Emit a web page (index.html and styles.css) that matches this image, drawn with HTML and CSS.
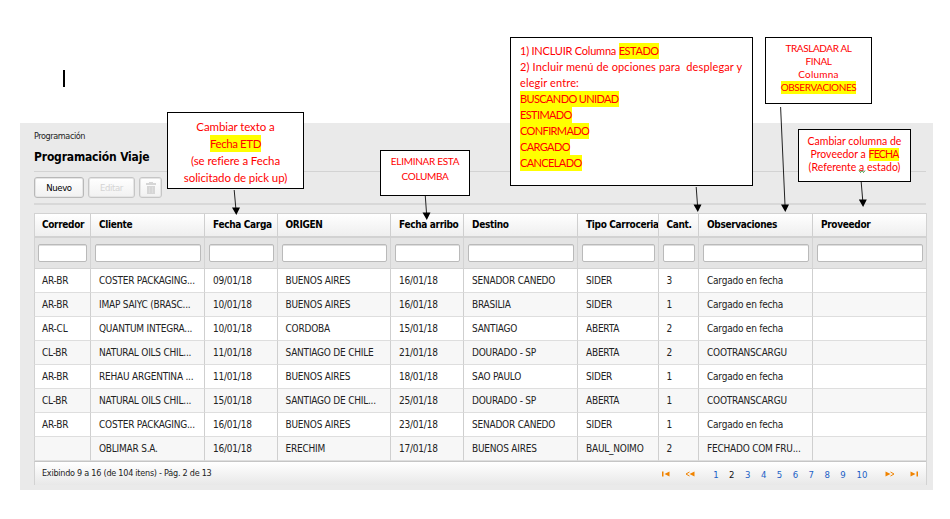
FILE: index.html
```html
<!DOCTYPE html>
<html lang="es">
<head>
<meta charset="utf-8">
<title>Programación Viaje</title>
<link rel="stylesheet" href="styles.css">
</head>
<body>
<span class="caret"></span>
<main class="panel">
  <div class="crumb">Programación</div>
  <h1>Programación Viaje</h1>
  <div class="toolbar">
    <button class="btn new">Nuevo</button>
    <button class="btn edit" disabled>Editar</button>
    <button class="btn del" disabled aria-label="Eliminar"><svg width="12" height="14" viewBox="0 0 12 14"><path d="M1 2h3V1h4v1h3v2H1zM2 5h8v8H2z" fill="#d6d6d6"/><path d="M4.5 6v6M7.5 6v6" stroke="#dedede"/></svg></button>
  </div>
  <section class="grid">
    <div class="row head"><div>Corredor</div><div>Cliente</div><div>Fecha Carga</div><div>ORIGEN</div><div>Fecha arribo</div><div>Destino</div><div>Tipo Carroceria</div><div>Cant.</div><div>Observaciones</div><div>Proveedor</div></div>
    <div class="row filter"><div><input></div><div><input></div><div><input></div><div><input></div><div><input></div><div><input></div><div><input></div><div><input></div><div><input></div><div><input></div></div>
    <div class="row"><div>AR-BR</div><div>COSTER PACKAGING...</div><div>09/01/18</div><div>BUENOS AIRES</div><div>16/01/18</div><div>SENADOR CANEDO</div><div>SIDER</div><div>3</div><div>Cargado en fecha</div><div></div></div>
    <div class="row alt"><div>AR-BR</div><div>IMAP SAIYC (BRASC...</div><div>10/01/18</div><div>BUENOS AIRES</div><div>16/01/18</div><div>BRASILIA</div><div>SIDER</div><div>1</div><div>Cargado en fecha</div><div></div></div>
    <div class="row"><div>AR-CL</div><div>QUANTUM INTEGRA...</div><div>10/01/18</div><div>CORDOBA</div><div>15/01/18</div><div>SANTIAGO</div><div>ABERTA</div><div>2</div><div>Cargado en fecha</div><div></div></div>
    <div class="row alt"><div>CL-BR</div><div>NATURAL OILS CHIL...</div><div>11/01/18</div><div>SANTIAGO DE CHILE</div><div>21/01/18</div><div>DOURADO - SP</div><div>ABERTA</div><div>2</div><div>COOTRANSCARGU</div><div></div></div>
    <div class="row"><div>AR-BR</div><div>REHAU ARGENTINA ...</div><div>11/01/18</div><div>BUENOS AIRES</div><div>18/01/18</div><div>SAO PAULO</div><div>SIDER</div><div>1</div><div>Cargado en fecha</div><div></div></div>
    <div class="row alt"><div>CL-BR</div><div>NATURAL OILS CHIL...</div><div>15/01/18</div><div>SANTIAGO DE CHIL...</div><div>25/01/18</div><div>DOURADO - SP</div><div>ABERTA</div><div>1</div><div>COOTRANSCARGU</div><div></div></div>
    <div class="row"><div>AR-BR</div><div>COSTER PACKAGING...</div><div>16/01/18</div><div>BUENOS AIRES</div><div>23/01/18</div><div>SENADOR CANEDO</div><div>SIDER</div><div>1</div><div>Cargado en fecha</div><div></div></div>
    <div class="row alt"><div></div><div>OBLIMAR S.A.</div><div>16/01/18</div><div>ERECHIM</div><div>17/01/18</div><div>BUENOS AIRES</div><div>BAUL_NOIMO</div><div>2</div><div>FECHADO COM FRU...</div><div></div></div>
    <footer>
      <span class="count">Exibindo 9 a 16 (de 104 itens) - Pág. 2 de 13</span>
      <nav>
        <svg class="first" width="8" height="6" viewBox="0 0 8 6"><path d="M0 .5h1.5v5H0zM7.5 .5v5L2.5 3z"/></svg>
        <svg class="prev" width="10" height="6" viewBox="0 0 10 6"><path d="M9.5 .5v5L4.5 3z"/><path class="open" d="M4.5 1L1 3l3.500 2"/></svg>
        <a>1</a><a class="now">2</a><a>3</a><a>4</a><a>5</a><a>6</a><a>7</a><a>8</a><a>9</a><a class="ten">10</a>
        <svg class="next" width="10" height="6" viewBox="0 0 10 6"><path d="M.5 .5v5L5.500 3z"/><path class="open" d="M5.500 1L9 3L5.500 5"/></svg>
        <svg class="last" width="8" height="6" viewBox="0 0 8 6"><path d="M.5 .5v5L5.500 3zM6.500 .5H8v5H6.500z"/></svg>
      </nav>
    </footer>
  </section>
</main>

<aside class="note n1"><p>Cambiar texto a</p><p><mark>Fecha ETD</mark></p><p>(se refiere a Fecha</p><p>solicitado de pick up)</p></aside>
<aside class="note n2"><p>ELIMINAR ESTA</p><p>COLUMBA</p></aside>
<aside class="note n3"><p class="include">1) INCLUIR Columna <mark>ESTADO</mark></p><p class="menu">2) Incluir menú de opciones para&nbsp; desplegar y</p><p class="menu">elegir entre:</p><p><mark>BUSCANDO UNIDAD</mark></p><p><mark>ESTIMADO</mark></p><p><mark>CONFIRMADO</mark></p><p><mark>CARGADO</mark></p><p><mark>CANCELADO</mark></p></aside>
<aside class="note n4"><p>TRASLADAR AL</p><p>FINAL</p><p class="mixed">Columna</p><p><mark>OBSERVACIONES</mark></p></aside>
<aside class="note n5"><p>Cambiar columna de</p><p>Proveedor a <mark>FECHA</mark></p><p>(Referente a estado)</p></aside>
<svg class="arrows" width="950" height="519" viewBox="0 0 950 519">
  <path class="line" d="M234.200 190L235.800 208M425.300 196L426.500 213M696.200 187L697.500 205M780.600 107L785 205M861.200 182L862.700 200"/>
  <path d="M232 207.500h8l-3.700 7.500zM422.500 212.500h8l-3.700 7.500zM693.500 204.500h8l-3.700 7.500zM781 204.500h8l-3.700 7.500zM858.800 199.500h8l-3.700 7.500z"/>
  <path class="spell" d="M859 170.500l1.500 2 1.500-2 1.500 2 1.500-2"/>
</svg>
</body>
</html>
```
FILE: styles.css
```css
* { box-sizing: border-box; }
body { margin: 0; width: 950px; height: 519px; overflow: hidden; background: #fff; position: relative; color: #222; font-family: "DejaVu Sans Condensed", "DejaVu Sans", sans-serif; font-stretch: condensed; font-size: 10px; }
.caret { position: absolute; left: 63px; top: 70px; width: 2px; height: 17px; background: #000; }
.panel { margin: 123px 0 0 20px; width: 913px; height: 367px; padding: 7px 7px 0 14px; background: #eaeaea; display: flow-root; }
.crumb { font-size: 9px; line-height: 12px; letter-spacing: -.4px; }
h1 { margin: 6px 0 0; font-size: 12px; line-height: 18px; height: 24px; color: #000; letter-spacing: -.18px; border-bottom: 1px solid #d3d3d3; }
.toolbar { display: flex; gap: 4px; height: 33px; padding-top: 5px; border-bottom: 2px solid #d8d8d8; }
.btn { height: 21px; padding: 0; border: 1px solid #b8b8b8; border-radius: 3px; box-shadow: inset 0 0 0 1px #e5e5e5; background: linear-gradient(#fff, #f1f1f1); font: inherit; font-size: 9.5px; color: #000; display: flex; align-items: center; justify-content: center; letter-spacing: -.4px; }
.new { width: 50px; }
.edit { width: 47px; color: #d4d4d4; border-color: #c6c6c6; }
.del { width: 23px; border-color: #c6c6c6; }
.grid { margin-top: 8px; width: 893px; height: 272px; border: 1px solid #d2d2d2; border-left-width: 0; }
.row { display: grid; grid-template-columns: 57px 114px 72.500px 113.500px 73px 114px 80.500px 40.500px 114px 113px; height: 24px; background: #fff; }
.row > div { border-right: 1px solid #cfcfcf; border-bottom: 1px solid #dedede; padding-left: 8px; line-height: 24px; white-space: nowrap; overflow: hidden; letter-spacing: -.22px; }
.row > div:first-child { border-left: 1px solid #d2d2d2; padding-left: 7px; }
.row > div:last-child { border-right: 0; }
.alt { background: #f7f7f7; }
.head { height: 24px; background: linear-gradient(#fff, #ededed); color: #000; font-weight: bold; }
.row.head > div { border-bottom: 2px solid #d2d2d2; line-height: 22px; letter-spacing: -.33px; }
.filter { height: 31px; background: #e4e4e4; }
.row.filter > div { padding: 6px 3px 0 4px; line-height: 0; border-color: #d3d3d3; }
.row.filter > div:first-child { padding-left: 3px; }
input { width: 100%; height: 18px; border: 1px solid #bababa; border-radius: 2px; background: #fff; display: block; padding: 0; box-shadow: inset 0 1px #ddd; }
footer { height: 24px; border-top: 1px solid #c5c5c5; border-left: 1px solid #d2d2d2; background: linear-gradient(#fff, #e8e8e8); display: flex; justify-content: space-between; align-items: flex-start; padding: 0 8px 0 7px; }
.count { font-size: 9px; line-height: 22px; letter-spacing: -.25px; }
nav { display: flex; align-items: center; height: 24px; color: #1b5fc6; fill: #f08300; font-size: 9.500px; }
nav a { width: 15.900px; text-align: center; }
nav .ten { width: 22px; }
.now { color: #111; }
.open { fill: none; stroke: #f08300; }
.first { margin-right: 15px; }
.prev { margin-right: 13px; }
.next { margin: 0 15px 0 12px; }
.note { position: absolute; border: 1px solid #000; background: #fff; color: #f00; text-align: center; font-family: Lato, "Open Sans", sans-serif; font-stretch: normal; white-space: pre; }
.note p { margin: 0; }
mark { display: inline-block; background: #ff0; color: inherit; line-height: inherit; }
.n1 { left: 167px; top: 112px; width: 137px; height: 77px; padding-top: 5px; font-size: 11.500px; line-height: 17px; letter-spacing: -.1px; }
.n1 mark { letter-spacing: -.4px; }
.n2 { left: 380px; top: 150px; width: 90px; height: 46px; padding-top: 3px; font-size: 10px; line-height: 15px; letter-spacing: -.3px; }
.n3 { left: 510px; top: 37px; width: 243px; height: 149px; padding: 5px 0 0 9px; font-size: 11px; line-height: 16px; text-align: left; letter-spacing: -.62px; }
.n3 .include { letter-spacing: -.22px; }
.n3 .include mark { letter-spacing: -.45px; }
.n3 .menu { letter-spacing: .13px; }
.n4 { left: 765px; top: 37px; width: 107px; height: 67px; padding-top: 4px; font-size: 10px; line-height: 13px; letter-spacing: -.4px; }
.n4 .mixed { letter-spacing: .2px; }
.n5 { left: 798px; top: 129px; width: 113px; height: 53px; padding-top: 5px; font-size: 10.500px; line-height: 13px; }
.n5 mark { letter-spacing: -.8px; }
.arrows { position: absolute; left: 0; top: 0; pointer-events: none; }
.line { stroke: #222; fill: none; }
.spell { stroke: #15801b; fill: none; stroke-width: .8; }
```
